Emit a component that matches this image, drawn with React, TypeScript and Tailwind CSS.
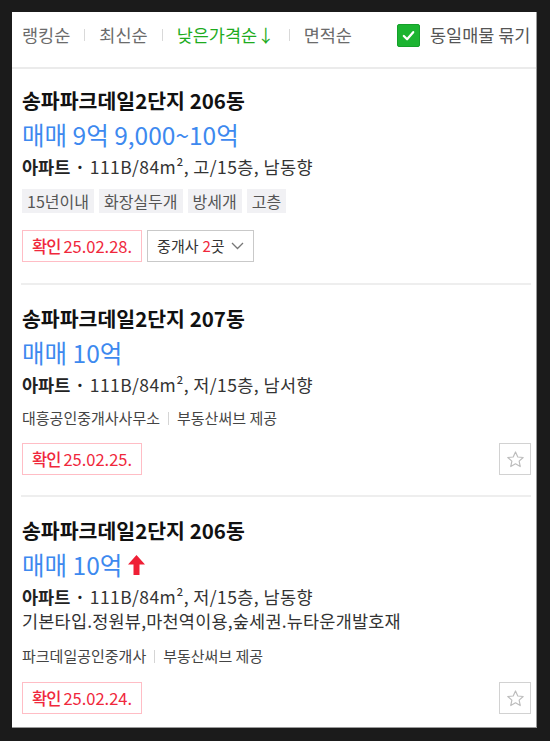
import React from "react";

function Sep() {
  return <span className="mx-[14px] h-[12px] w-px bg-[#d9d9d9]" />;
}

function Star() {
  return (
    <div className="flex h-[32px] w-[32px] items-center justify-center border border-[#d2d2d2]">
      <svg width="19" height="19" viewBox="0 0 24 24" fill="none" stroke="#bdbdbd" strokeWidth="1.5" strokeLinejoin="round">
        <polygon points="12,2.5 14.9,8.8 21.7,9.5 16.6,14.1 18,20.9 12,17.4 6,20.9 7.4,14.1 2.3,9.5 9.1,8.8" />
      </svg>
    </div>
  );
}

function Badge({ date }: { date: string }) {
  return (
    <div className="flex h-[32px] items-center border border-[#ffbdc5] px-[9px] text-[16.5px] leading-[20px] text-[#f0283c]">
      <span className="font-medium tracking-[-1px]">확인</span>
      <span className="ml-[3px]">{date}</span>
    </div>
  );
}

function Title({ children }: { children: React.ReactNode }) {
  return <h2 className="text-[20.5px] font-bold leading-[28px] text-[#111]">{children}</h2>;
}

function Price({ children, arrow }: { children: React.ReactNode; arrow?: boolean }) {
  return (
    <div className="mt-[5px] flex h-[32px] items-center text-[24.5px] leading-[32px] text-[#3d89ef]">
      <span>{children}</span>
      {arrow && (
        <svg className="ml-[6px]" width="17" height="20" viewBox="0 0 17 20">
          <polygon points="8.5,0 17,9.5 11.5,9.5 11.5,20 5.5,20 5.5,9.5 0,9.5" fill="#ef1f35" />
        </svg>
      )}
    </div>
  );
}

function Info({ floor, dir }: { floor: string; dir: string }) {
  return (
    <p className="mt-[4px] text-[17.5px] leading-[24px] tracking-[0.4px] text-[#333]">
      <span className="font-semibold tracking-normal text-[#222]">아파트</span>
      <span className="font-bold text-[#222]"> · </span>
      111B/84m², {floor}, {dir}
    </p>
  );
}

function Broker({ name, mt }: { name: string; mt: string }) {
  return (
    <div className={`${mt} flex h-[20px] items-center text-[15px] leading-[20px] text-[#444]`}>
      <span>{name}</span>
      <span className="mx-[8px] h-[13px] w-px bg-[#d5d5d5]" />
      <span>부동산써브 제공</span>
    </div>
  );
}

export default function App() {
  return (
    <div className="h-[741px] w-[550px] overflow-hidden bg-[#1b1b1b] pl-[12px] pt-[12px] font-['Noto_Sans_CJK_KR','Noto_Sans',sans-serif]">
      <div className="h-[716px] w-[525px] overflow-hidden border-b border-r border-[#9a9a9a] bg-white">
        {/* header */}
        <div className="h-[57px] overflow-hidden whitespace-nowrap border-b-2 border-[#ebebeb] pl-[10px] pt-[11px]">
          <div className="flex h-[24px] items-center text-[17.5px] leading-[24px] text-[#6b6b6b]">
            <span>랭킹순</span>
            <Sep />
            <span>최신순</span>
            <Sep />
            <span className="text-[#1eab1e]">낮은가격순↓</span>
            <Sep />
            <span>면적순</span>
            <span className="ml-[45px] flex h-[23px] w-[23px] shrink-0 items-center justify-center rounded-[2px] border border-[#15a02a] bg-[#1cb431]">
              <svg width="15" height="15" viewBox="0 0 16 16" fill="none" stroke="white" strokeWidth="2.4" strokeLinecap="round" strokeLinejoin="round">
                <polyline points="3,8.5 6.5,12 13,4.5" />
              </svg>
            </span>
            <span className="ml-[10px] text-[#555]">동일매물 묶기</span>
          </div>
        </div>

        {/* item 1 */}
        <div className="pl-[9px] pr-[5px]">
          <div className="border-b-2 border-[#eeeeee] pb-[21px] pl-px pt-[17px]">
            <Title>송파파크데일2단지 206동</Title>
            <Price>매매 9억 9,000~10억</Price>
            <Info floor="고/15층" dir="남동향" />
            <div className="mt-[10px] flex gap-[5px] text-[16px] leading-[24px] text-[#555]">
              {["15년이내", "화장실두개", "방세개", "고층"].map((t) => (
                <span key={t} className="h-[24px] bg-[#f1f1f4] px-[5px]">
                  {t}
                </span>
              ))}
            </div>
            <div className="mt-[17px] flex items-center gap-[5px]">
              <Badge date="25.02.28." />
              <div className="flex h-[32px] items-center border border-[#c9c9c9] pl-[9px] pr-[9px] text-[15px] leading-[20px] text-[#333]">
                <span>중개사</span>
                <span className="ml-[4px] text-[#f0283c]">2</span>
                <span>곳</span>
                <svg className="ml-[6px]" width="13" height="8" viewBox="0 0 13 8" fill="none" stroke="#777" strokeWidth="1.3">
                  <polyline points="1,1 6.5,6.5 12,1" />
                </svg>
              </div>
            </div>
          </div>
        </div>

        {/* item 2 */}
        <div className="pl-[9px] pr-[5px]">
          <div className="border-b-2 border-[#eeeeee] pb-[20px] pl-px pt-[19px]">
            <Title>송파파크데일2단지 207동</Title>
            <Price>매매 10억</Price>
            <Info floor="저/15층" dir="남서향" />
            <Broker name="대흥공인중개사사무소" mt="mt-[11px]" />
            <div className="mt-[15px] flex items-center justify-between">
              <Badge date="25.02.25." />
              <Star />
            </div>
          </div>
        </div>

        {/* item 3 */}
        <div className="pl-[9px] pr-[5px]">
          <div className="pb-[19px] pl-px pt-[19px]">
            <Title>송파파크데일2단지 206동</Title>
            <Price arrow>매매 10억</Price>
            <Info floor="저/15층" dir="남동향" />
            <p className="text-[17.5px] leading-[24px] tracking-[0.2px] text-[#333]">기본타입.정원뷰,마천역이용,숲세권.뉴타운개발호재</p>
            <Broker name="파크데일공인중개사" mt="mt-[13px]" />
            <div className="mt-[16px] flex items-center justify-between">
              <Badge date="25.02.24." />
              <Star />
            </div>
          </div>
        </div>
      </div>
    </div>
  );
}
